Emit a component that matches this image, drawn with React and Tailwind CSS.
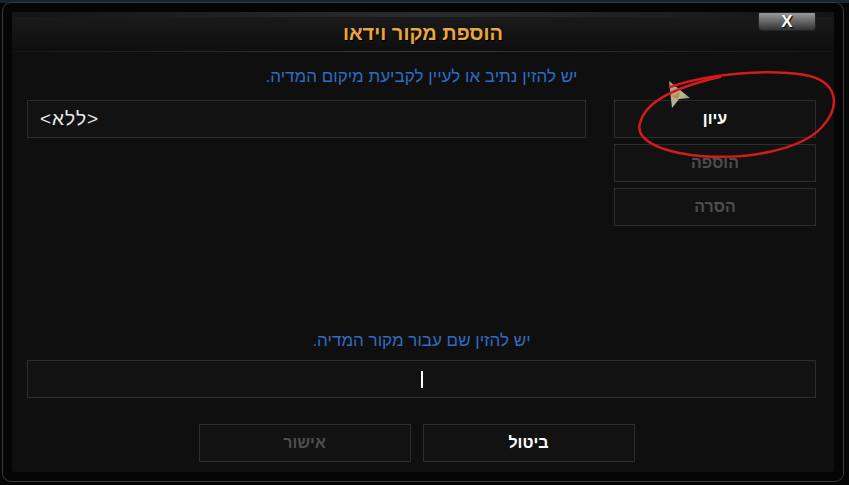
export default function App() {
  const font = { fontFamily: '"Liberation Sans", "DejaVu Sans", Arial, sans-serif' }
  return (
    <div className="relative h-[485px] w-[849px] overflow-hidden bg-[#050505]" style={font}>
      {/* faint backdrop strip at top */}
      <div className="absolute left-0 top-0 h-[3px] w-full bg-[#1a2430]" />
      <div className="absolute left-[2px] top-[2px] h-[480px] w-[842px] rounded-[9px] border border-[#3a3a3a] bg-[#050505] p-[9px]">
        <div className="flex h-full w-full flex-col rounded-[3px] bg-[#0f0f0f]">
          {/* header */}
          <div className="relative flex h-[39px] items-center justify-center bg-gradient-to-b from-[#1c1c1c] to-[#0e0e0e]">
            <div className="absolute left-0 top-0 h-[5px] w-full bg-gradient-to-r from-[#141414] via-[#2c2c2c] to-[#141414]" />
            <span dir="rtl" className="mt-[2px] text-[20px] font-bold text-[#e9a63b] [text-shadow:1px_1px_1px_#000]">הוספת מקור וידאו</span>
            <div className="absolute right-[18px] top-0 flex h-[19px] w-[58px] items-center justify-center rounded-b-[4px] rounded-t-[2px] border border-[#222] bg-gradient-to-b from-[#9a9a9a] via-[#666] to-[#333]">
              <span className="text-[17px] font-bold leading-none text-white [text-shadow:1px_1px_1px_#000]">X</span>
            </div>
          </div>
          <div className="h-px bg-gradient-to-r from-[#151515] via-[#3b3b3b] to-[#151515]" />

          <div className="flex flex-1 flex-col pl-[15px] pr-[18px]">
            <p dir="rtl" className="mt-[15px] text-center text-[17px] leading-[20px] text-[#2f6bc4]">
              יש להזין נתיב או לעיין לקביעת מיקום המדיה.
            </p>

            <div className="mt-[13px] flex gap-[28px]">
              <div className="flex h-[38px] w-[559px] items-center border border-[#2d2d2d] bg-[#121212] px-[12px]">
                <span dir="rtl" className="text-[19px] tracking-[1px] text-[#ececec]">&lt;ללא&gt;</span>
              </div>
              <div className="flex w-[202px] flex-col gap-[6px]">
                <div className="flex h-[38px] items-center justify-center border border-[#2d2d2d] bg-[#121212] text-[16px] font-bold text-white" dir="rtl">עיון</div>
                <div className="flex h-[38px] items-center justify-center border border-[#2d2d2d] bg-[#121212] text-[16px] font-bold text-[#4d4d4d]" dir="rtl">הוספה</div>
                <div className="flex h-[38px] items-center justify-center border border-[#2d2d2d] bg-[#121212] text-[16px] font-bold text-[#4d4d4d]" dir="rtl">הסרה</div>
              </div>
            </div>

            <p dir="rtl" className="mt-[105px] text-center text-[17px] leading-[20px] text-[#2f6bc4]">
              יש להזין שם עבור מקור המדיה.
            </p>

            <div className="mt-[9px] flex h-[38px] items-center justify-center border border-[#2d2d2d] bg-[#121212]">
              <div className="h-[17px] w-[2px] bg-white" />
            </div>

            <div className="mt-[26px] flex justify-center gap-[12px] pr-[10px]">
              <div dir="rtl" className="flex h-[38px] w-[212px] items-center justify-center border border-[#2d2d2d] bg-[#121212] text-[16px] font-bold text-[#4d4d4d]">אישור</div>
              <div dir="rtl" className="flex h-[38px] w-[212px] items-center justify-center border border-[#2d2d2d] bg-[#121212] text-[16px] font-bold text-white">ביטול</div>
            </div>
          </div>
        </div>
      </div>

      {/* mouse pointer */}
      <svg className="absolute left-[666px] top-[80px]" width="26" height="30" viewBox="0 0 26 30">
        <defs>
          <linearGradient id="cur" x1="0" y1="0" x2="1" y2="1">
            <stop offset="0" stopColor="#9a9a8a" />
            <stop offset="0.6" stopColor="#b8b890" />
            <stop offset="1" stopColor="#707060" />
          </linearGradient>
        </defs>
        <path d="M3 1 L24 18 L13 19 L6 28 Z" fill="url(#cur)" />
        <path d="M6 16 L14 12 L12 20 Z" fill="#c77a2a" opacity="0.7" />
      </svg>

      {/* red annotation ellipse */}
      <svg className="absolute left-[630px] top-[65px]" width="212" height="100" viewBox="0 0 212 100">
        <path
          d="M40 22 C80 8 140 4 175 10 C207 16 212 40 192 62 C172 84 120 95 70 91 C30 87 5 75 10 58 C15 38 40 26 70 17 C80 14 85 13 90 12"
          fill="none"
          stroke="#d41b1b"
          strokeWidth="2.5"
          strokeLinecap="round"
        />
      </svg>
    </div>
  )
}
